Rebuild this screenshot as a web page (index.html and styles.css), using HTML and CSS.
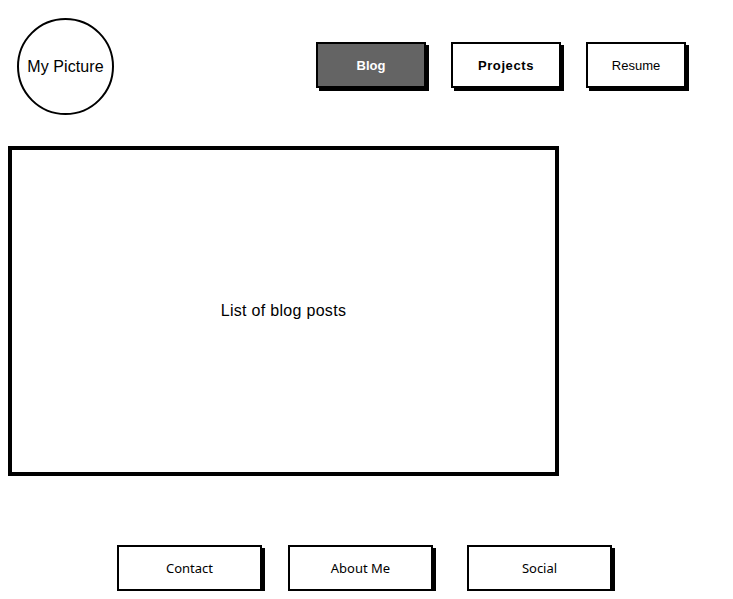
FILE: index.html
```html
<!DOCTYPE html>
<html lang="en">
<head>
    <meta charset="UTF-8">
    <meta name="viewport" content="width=device-width, initial-scale=1.0">
    <title>My Blog</title>
    <link rel="stylesheet" href="styles.css">
</head>
<body>
    <div id="header">
        <div class="picture">My Picture</div>
        <div id="nav">
            <div class="nav-btn active blog">Blog</div>
            <div class="nav-btn projects">Projects</div>
            <div class="nav-btn resume">Resume</div>
        </div>
    </div>

    <div id="posts">List of blog posts</div>

    <div id="footer">
        <div class="foot-btn">Contact</div>
        <div class="foot-btn about">About Me</div>
        <div class="foot-btn social">Social</div>
    </div>
</body>
</html>
```

FILE: styles.css
```css
body {
    font-family: "Liberation Sans", Arial, sans-serif;
    margin: 0;
    background-color: #fff;
    color: #000;
}

#header {
    display: flex;
    align-items: flex-start;
    padding-top: 18px;
}

.picture {
    width: 93px;
    height: 93px;
    margin-left: 17px;
    border: 2px solid #000;
    border-radius: 50%;
    display: flex;
    justify-content: center;
    align-items: center;
    font-size: 16px;
    letter-spacing: 0.1px;
}

#nav {
    display: flex;
    gap: 25px;
    margin-left: 202px;
    margin-top: 24px;
}

.nav-btn {
    width: 106px;
    height: 42px;
    border: 2px solid #000;
    box-shadow: 3px 3px 0 #000;
    display: flex;
    justify-content: center;
    align-items: center;
    font-size: 13px;
    background-color: #fff;
}

.nav-btn.blog {
    font-weight: bold;
}

.nav-btn.projects {
    font-weight: bold;
    letter-spacing: 0.6px;
}

.nav-btn.resume {
    width: 96px;
}

.nav-btn.active {
    background-color: #646464;
    color: #fff;
}

#posts {
    width: 543px;
    height: 322px;
    margin: 31px 0 0 8px;
    border: 4px solid #000;
    display: flex;
    justify-content: center;
    align-items: center;
    font-size: 16px;
    letter-spacing: 0.3px;
}

#footer {
    display: flex;
    margin: 69px 0 0 117px;
}

.foot-btn {
    width: 141px;
    height: 42px;
    border: 2px solid #000;
    box-shadow: 3px 3px 0 #000;
    display: flex;
    justify-content: center;
    align-items: center;
    font-family: "Noto Sans", sans-serif;
    font-size: 13px;
}

.foot-btn.about {
    margin-left: 26px;
}

.foot-btn.social {
    margin-left: 34px;
}
```
